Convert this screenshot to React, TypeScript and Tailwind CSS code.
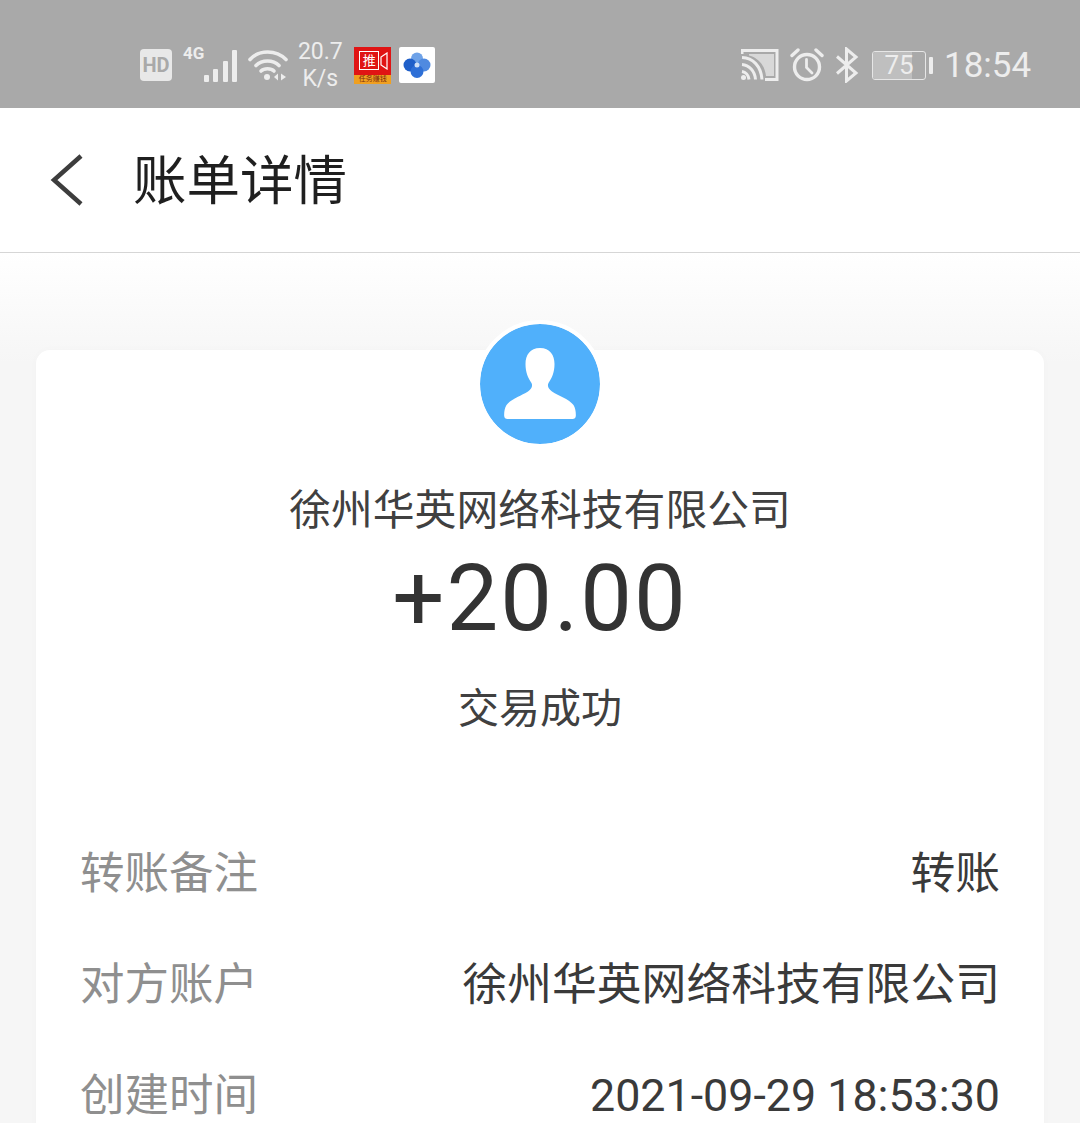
import React from 'react';

const CJK = "font-['Roboto','Noto_Sans_CJK_SC','Noto_Sans',sans-serif]";

function SignalIcon() {
  return (
    <svg width="38" height="34" viewBox="0 0 38 34" fill="#ededed">
      <rect x="2" y="26" width="5" height="7" rx="1" />
      <rect x="11" y="20" width="5" height="13" rx="1" />
      <rect x="21" y="12" width="5" height="21" rx="1" />
      <rect x="30" y="1" width="5" height="32" rx="1" />
    </svg>
  );
}

function WifiIcon() {
  return (
    <svg width="40" height="34" viewBox="0 0 40 34" fill="none" stroke="#ededed" strokeWidth="3.6" strokeLinecap="round">
      <path d="M2 11.500C11 1.500 28 1.500 38 11.500" />
      <path d="M8 17.500C14 11.500 25 11.500 31 17.500" />
      <path d="M13 23C16 20 23 20 26 23" />
      <circle cx="19" cy="29" r="3" fill="#ededed" stroke="none" />
      <path d="M30 25.500 26 29 30 32.500Z" fill="#ededed" stroke="none" />
      <path d="M33 25.500 38 29 33 32.500Z" fill="#ededed" stroke="none" />
    </svg>
  );
}

function CastIcon() {
  return (
    <svg width="38" height="32" viewBox="0 0 38 32" fill="none">
      <path d="M1 5V1.500H36V30.500H24" stroke="#ededed" strokeWidth="3" />
      <path d="M8 5H33V27H25C24 17 18 9 8 6.500Z" fill="#ededed" opacity="0.7" />
      <path d="M1 8.500C12 9 20 17 21 30.500M1 15.500C8 16 14 22 14.500 30.500M1 22.500C4.500 23 7.500 26 8 30.500" stroke="#ededed" strokeWidth="3" />
      <circle cx="2.500" cy="28.500" r="2.500" fill="#ededed" />
    </svg>
  );
}

function AlarmIcon() {
  return (
    <svg width="34" height="34" viewBox="0 0 34 34" fill="none" stroke="#ededed" strokeWidth="3.400" strokeLinecap="round">
      <circle cx="17" cy="19" r="12.500" />
      <path d="M16.500 11.500V19.500L22 25" strokeWidth="2.800" />
      <path d="M2 7.500 8 2M32 7.500 26 2" />
    </svg>
  );
}

function BluetoothIcon() {
  return (
    <svg width="24" height="36" viewBox="0 0 24 36" fill="none" stroke="#ededed" strokeWidth="3" strokeLinejoin="miter">
      <path d="M2 9.500 21 26 11.500 34V2L21 10 2 26.500" />
    </svg>
  );
}

function BatteryIcon() {
  return (
    <div className="flex items-center gap-[3px]">
      <div className="relative h-[29px] w-[54px] overflow-hidden rounded-[3px] border border-[#e6e6e6]">
        <div className="h-full w-[39px] bg-[#bfbfbf]" />
        <span className="absolute inset-0 flex items-center justify-center text-[26px] leading-none text-[#ededed]">75</span>
      </div>
      <div className="h-[17px] w-[4px] rounded-[1px] bg-[#ededed]" />
    </div>
  );
}

function TaskAppIcon() {
  return (
    <div className="flex h-[37px] w-[37px] flex-col overflow-hidden bg-[#e01414]">
      <div className="flex flex-1 items-center gap-[1px] pl-[5px]">
        <span className="flex h-[19px] w-[20px] items-center justify-center border border-white text-[13px] leading-none text-white">推</span>
        <svg width="8" height="18" viewBox="0 0 8 18" fill="none" stroke="#fff" strokeWidth="1.200">
          <path d="M7 1 1 5V13L7 17Z" />
        </svg>
      </div>
      <div className="flex h-[9px] items-center justify-center overflow-hidden bg-[#f0a020] text-[7px] leading-none text-[#7a2a10]">任务赚钱</div>
    </div>
  );
}

function BlueAppIcon() {
  return (
    <div className="flex h-[36px] w-[36px] items-center justify-center rounded-[2px] bg-white">
      <svg width="28" height="28" viewBox="0 0 28 28">
        <circle cx="14" cy="7.500" r="6" fill="#6ea2e8" />
        <circle cx="21" cy="14" r="6.500" fill="#4f8ae0" />
        <circle cx="7" cy="14" r="6.500" fill="#1f5fc9" />
        <circle cx="14" cy="20.500" r="6.500" fill="#2e6fd6" />
        <circle cx="14" cy="14" r="2.500" fill="#cfe0f7" />
      </svg>
    </div>
  );
}

function StatusBar() {
  return (
    <div className="flex h-[108px] items-center justify-between bg-[#a9a9a9] pl-[140px] pr-[49px] pt-[22px] text-[#ededed]">
      <div className="flex items-center">
        <span className="flex h-[32px] w-[32px] items-center justify-center rounded-[4px] bg-[#e8e8e8] text-[20px] font-bold leading-none text-[#a9a9a9]">HD</span>
        <div className="ml-[11px] flex items-start">
          <span className="mt-[-2px] text-[17px] font-bold leading-none">4G</span>
          <div className="ml-[-2px] mt-[2px]"><SignalIcon /></div>
        </div>
        <div className="ml-[8px]"><WifiIcon /></div>
        <div className="ml-[9px] flex w-[46px] flex-col items-center text-[23px] leading-[27px]">
          <span>20.7</span>
          <span>K/s</span>
        </div>
        <div className="ml-[11px]"><TaskAppIcon /></div>
        <div className="ml-[8px]"><BlueAppIcon /></div>
      </div>
      <div className="flex items-center">
        <CastIcon />
        <div className="ml-[11px]"><AlarmIcon /></div>
        <div className="ml-[11px]"><BluetoothIcon /></div>
        <div className="ml-[13px]"><BatteryIcon /></div>
        <span className="ml-[11px] w-[87px] text-[35px] leading-none">18:54</span>
      </div>
    </div>
  );
}

function DetailRow({ label, value }: { label: string; value: string }) {
  return (
    <div className="flex h-[111px] items-center justify-between">
      <span className="text-[44.500px] leading-none text-[#8f8f8f]">{label}</span>
      <span className="text-[44.800px] leading-none text-[#3a3a3a]">{value}</span>
    </div>
  );
}

export default function App() {
  return (
    <div className={`h-[1123px] w-[1080px] overflow-hidden bg-[#f6f6f6] ${CJK}`}>
      <StatusBar />

      <div className="flex h-[145px] items-center border-b border-[#d6d6d6] bg-white pl-[48px] pt-[3px]">
        <svg width="36" height="54" viewBox="0 0 36 54" fill="none" stroke="#3d3d3d" strokeWidth="4.500" className="mt-[-4px]">
          <path d="M33 3 6 27 33 51" />
        </svg>
        <h1 className="ml-[49px] text-[53.500px] font-normal leading-none text-[#1f1f1f]">账单详情</h1>
      </div>

      {/* gray fade behind the top of the card */}
      <div className="h-full bg-gradient-to-b from-[#ffffff] to-[#f6f6f6] bg-[length:100%_110px] bg-no-repeat px-[36px] pt-[97px]">
        <div className="relative h-[900px] rounded-t-[14px] bg-white px-[44px] pt-[140px] shadow-[0_0_10px_rgba(0,0,0,0.02)]">
          <div className="absolute left-1/2 top-[-26px] flex h-[120px] w-[120px] -translate-x-1/2 items-center justify-center rounded-full bg-[#50b0fb] outline-[4px] outline-white">
            <svg width="74" height="74" viewBox="0 0 74 74" fill="#fff">
              <path d="M37 1C27 1 22.500 8 22.500 17C22.500 25 25 31 28.500 36C30 39 28.500 42 25 44.500C18 49 8 52 3.500 58C1.500 61 1 66 1.200 69C1.300 71 2.500 72 4.500 72H69.500C71.500 72 72.700 71 72.800 69C73 66 72.500 61 70.500 58C66 52 56 49 49 44.500C45.500 42 44 39 45.500 36C49 31 51.500 25 51.500 17C51.500 8 47 1 37 1Z" />
            </svg>
          </div>

          <div className="flex flex-col items-center">
            <p className="text-[41.800px] leading-none text-[#404040]">徐州华英网络科技有限公司</p>
            <p className="mt-[21px] text-[92px] leading-none tracking-[2px] text-[#333333]">+20.00</p>
            <p className="mt-[44px] text-[41px] leading-none text-[#404040]">交易成功</p>
          </div>

          <div className="mt-[89px]">
            <DetailRow label="转账备注" value="转账" />
            <DetailRow label="对方账户" value="徐州华英网络科技有限公司" />
            <DetailRow label="创建时间" value="2021-09-29 18:53:30" />
          </div>
        </div>
      </div>
    </div>
  );
}
